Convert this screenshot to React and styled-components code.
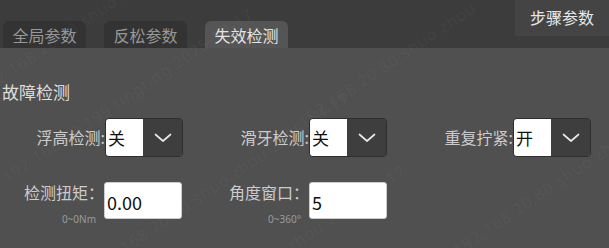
import React from 'react';
import styled, { createGlobalStyle } from 'styled-components';

const GlobalStyle = createGlobalStyle`
    html, body {
        margin: 0;
        padding: 0;
        background: #505050;
    }
    body {
        font-family: "Noto Sans CJK SC", "Noto Sans", sans-serif;
    }
`;

const tabs = [
    { id: 'global', name: '全局参数' },
    { id: 'loosen', name: '反松参数' },
    { id: 'fail', name: '失效检测', active: true },
];

const selects = [
    { label: '浮高检测:', value: '关' },
    { label: '滑牙检测:', value: '关' },
    { label: '重复拧紧:', value: '开' },
];

const inputs = [
    { label: '检测扭矩：', range: '0~0Nm', value: '0.00' },
    { label: '角度窗口：', range: '0~360°', value: '5' },
];

// faint diagonal watermark lines over the page
const marks = [
    { x: -20, y: 80, text: '192.168.20.80 shuo.zhou 2025-10-17' },
    { x: 4, y: 168, text: '192.168.69.199 tingting 2025-10-17' },
    { x: 92, y: 258, text: '192.168.20.80 shuo.zhou 2025-10-17' },
    { x: 250, y: 262, text: 'shuo.zhou 2025-10-17' },
    { x: 300, y: 112, text: '192.168.20.80 shuo.zhou' },
    { x: 455, y: 240, text: '192.168.20.80 shuo.zhou' },
];

const Chevron = () => (
    <svg width="18" height="10" viewBox="0 0 18 10" fill="none">
        <path d="M1.5 1.5 L9 8 L16.5 1.5" stroke="#e6e6e6" strokeWidth="1.7" strokeLinecap="round" strokeLinejoin="round"/>
    </svg>
);

const App = () => {
    return (
        <Page>
            <GlobalStyle/>
            <TopBar>
                <TabList>
                    {tabs.map(tab => (
                        <Tab key={tab.id} $active={tab.active}>{tab.name}</Tab>
                    ))}
                </TabList>
                <StepButton>步骤参数</StepButton>
            </TopBar>
            <Content>
                <SectionTitle>故障检测</SectionTitle>
                <Row>
                    {selects.map(item => (
                        <Field key={item.label}>
                            <Label>{item.label}</Label>
                            <Select>
                                <SelectValue>{item.value}</SelectValue>
                                <SelectArrow><Chevron/></SelectArrow>
                            </Select>
                        </Field>
                    ))}
                </Row>
                <InputRow>
                    {inputs.map(item => (
                        <Field key={item.label}>
                            <LabelStack>
                                <InputLabel>{item.label}</InputLabel>
                                <Range>{item.range}</Range>
                            </LabelStack>
                            <TextInput defaultValue={item.value}/>
                        </Field>
                    ))}
                </InputRow>
            </Content>
            <Watermark>
                {marks.map(m => (
                    <Mark key={`${m.x}-${m.y}`} style={{ left: m.x, top: m.y }}>{m.text}</Mark>
                ))}
            </Watermark>
        </Page>
    )
}

const Page = styled.div`
    position: relative;
    width: 609px;
    height: 248px;
    overflow: hidden;
    background: #505050;
`;
const TopBar = styled.div`
    height: 48px;
    background: #3c3c3c;
    display: flex;
    justify-content: space-between;
`;
const TabList = styled.div`
    display: flex;
    align-items: flex-end;
    gap: 18px;
    padding-left: 3px;
`;
const Tab = styled.div`
    width: 83px;
    height: 27px;
    box-sizing: border-box;
    padding-top: 1px;
    border-radius: 6px 6px 0 0;
    background: ${({$active}) => $active ? '#555555' : '#333333'};
    color: ${({$active}) => $active ? '#e4e4e4' : '#979797'};
    font-size: 16px;
    line-height: 26px;
    text-align: center;
`;
const StepButton = styled.div`
    width: 94px;
    height: 36px;
    background: #444444;
    color: #e8e8e8;
    font-size: 16px;
    line-height: 34px;
    text-align: center;
    border-bottom-left-radius: 3px;
`;
const Content = styled.div`
    padding-top: 32px;
`;
const SectionTitle = styled.div`
    padding-left: 2px;
    color: #dcdcdc;
    font-size: 17px;
    line-height: 24px;
`;
const Row = styled.div`
    display: grid;
    grid-template-columns: repeat(3, 204px);
    margin-top: 14px;
`;
const InputRow = styled(Row)`
    grid-template-columns: repeat(2, 205px);
    margin-top: 25px;
`;
const Field = styled.div`
    display: flex;
    align-items: flex-start;
`;
const Label = styled.div`
    width: 105px;
    text-align: right;
    color: #cccccc;
    font-size: 16px;
    line-height: 39px;
    white-space: nowrap;
`;
const Select = styled.div`
    width: 78px;
    height: 39px;
    box-sizing: border-box;
    display: flex;
    border: 1px solid #2e2e2e;
    border-radius: 4px;
    overflow: hidden;
`;
const SelectValue = styled.div`
    width: 37px;
    background: #ffffff;
    color: #111111;
    font-size: 17px;
    line-height: 37px;
    padding-left: 2px;
    box-sizing: border-box;
`;
const SelectArrow = styled.div`
    flex: 1;
    background: #3e3e3e;
    display: flex;
    align-items: center;
    justify-content: center;
    padding-top: 1px;
`;
const LabelStack = styled.div`
    width: 104px;
    display: flex;
    flex-direction: column;
    align-items: flex-end;
`;
const InputLabel = styled.div`
    color: #cccccc;
    font-size: 16px;
    line-height: 20px;
    white-space: nowrap;
`;
const Range = styled.div`
    color: #9a9a9a;
    font-family: "Noto Sans", sans-serif;
    font-size: 10px;
    line-height: 12px;
    margin-top: 11px;
    margin-right: 8px;
    white-space: nowrap;
`;
const TextInput = styled.input`
    width: 78px;
    height: 37px;
    box-sizing: border-box;
    border: 1px solid #cccccc;
    border-radius: 3px;
    background: #ffffff;
    color: #111111;
    font-family: "Noto Sans CJK SC", "Noto Sans", sans-serif;
    font-size: 18px;
    padding: 2px 0 0 2px;
    outline: none;
`;
const Watermark = styled.div`
    position: absolute;
    inset: 0;
    pointer-events: none;
`;
const Mark = styled.div`
    position: absolute;
    transform: rotate(-34deg);
    transform-origin: left center;
    white-space: nowrap;
    font-family: "Noto Sans", sans-serif;
    font-size: 16px;
    letter-spacing: 1px;
    color: rgba(255, 255, 255, 0.045);
`;

export default App;
